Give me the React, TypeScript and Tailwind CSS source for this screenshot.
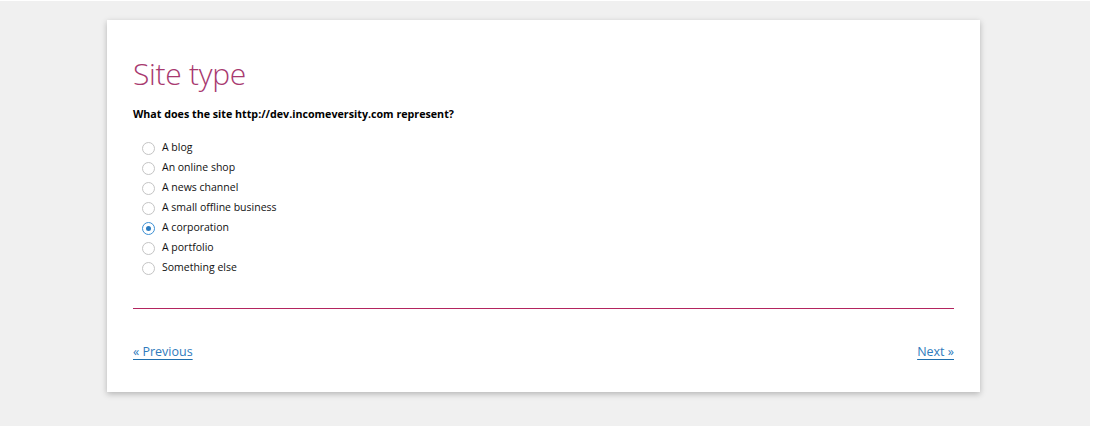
const options = [
  "A blog",
  "An online shop",
  "A news channel",
  "A small offline business",
  "A corporation",
  "A portfolio",
  "Something else",
];

export default function App() {
  const selected = "A corporation";

  return (
    <div className="w-[1093px] h-[426px] bg-white pt-px" style={{ fontFamily: "'Open Sans', 'Noto Sans', sans-serif" }}>
      <div className="w-[1090px] h-[425px] bg-[#f0f0f0] pt-[19px] pl-[107px]">
        <div className="w-[873px] h-[372px] bg-white shadow-[0_2px_6px_rgba(0,0,0,0.25)] px-[26px] pt-[34px]">
          <h1 className="text-[30px] font-light leading-[40px] text-[#a8396f] tracking-[-0.3px]">Site type</h1>
          <p className="mt-[13px] text-[10.7px] font-bold text-black leading-[14px]">
            What does the site http://dev.incomeversity.com represent?
          </p>
          <ul className="mt-[17px] pl-[9px]">
            {options.map((opt) => {
              const checked = opt === selected;
              return (
                <li key={opt} className="flex items-center h-[20px]">
                  <span
                    className={
                      checked
                        ? "w-[13px] h-[13px] rounded-full border border-[#3b8fd4] bg-white flex items-center justify-center"
                        : "w-[13px] h-[13px] rounded-full border border-[#c4c4c4] bg-white"
                    }
                  >
                    {checked && <span className="w-[5px] h-[5px] rounded-full bg-[#2a7bc0]" />}
                  </span>
                  <span className="ml-[7px] text-[10.5px] text-[#111]">{opt}</span>
                </li>
              );
            })}
          </ul>
          <div className="mt-[30px] border-t border-[#b3245f]" />
          <div className="mt-[34px] flex justify-between text-[12.5px] text-[#2f7bbd]">
            <a href="#" className="underline underline-offset-[3px] decoration-[#1f6fae]">« Previous</a>
            <a href="#" className="underline underline-offset-[3px] decoration-[#1f6fae]">Next »</a>
          </div>
        </div>
      </div>
    </div>
  );
}
